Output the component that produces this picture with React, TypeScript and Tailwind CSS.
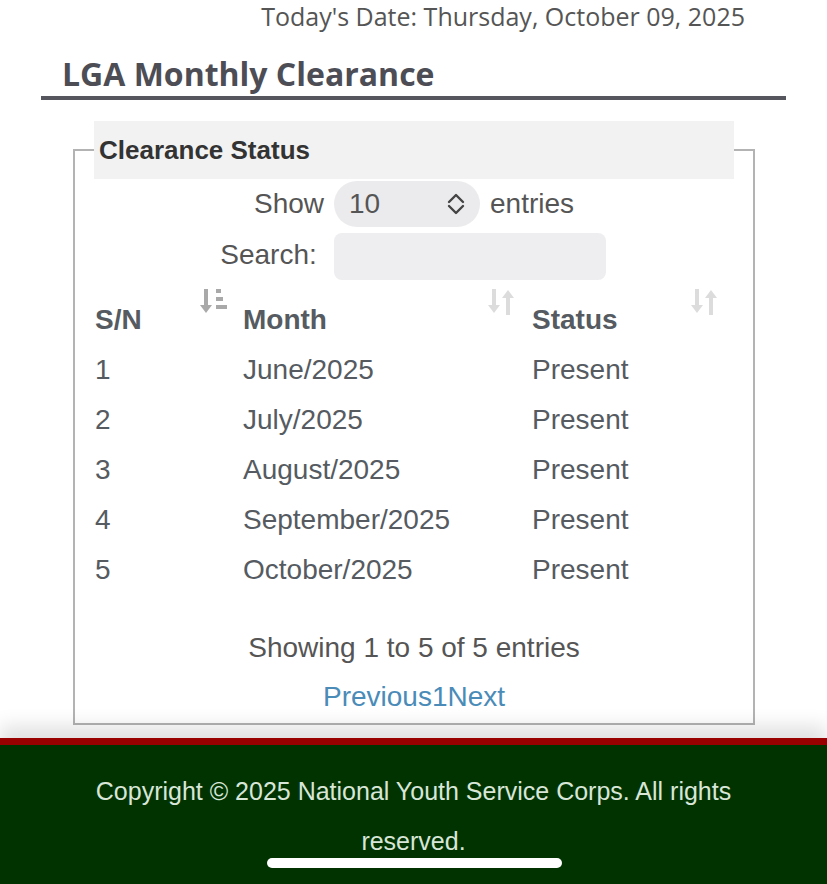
const rows = [
  { sn: 1, month: 'June/2025', status: 'Present' },
  { sn: 2, month: 'July/2025', status: 'Present' },
  { sn: 3, month: 'August/2025', status: 'Present' },
  { sn: 4, month: 'September/2025', status: 'Present' },
  { sn: 5, month: 'October/2025', status: 'Present' },
];

function SortActive() {
  return (
    <svg width="30" height="30" viewBox="0 0 30 30" className="text-[#a9a9a9]">
      <rect x="5" y="2" width="4" height="18" fill="currentColor" />
      <path d="M1 18 L13 18 L7 26 Z" fill="currentColor" />
      <rect x="17" y="2" width="5" height="4" fill="currentColor" />
      <rect x="17" y="10" width="7" height="4" fill="currentColor" />
      <rect x="17" y="18" width="11" height="4" fill="currentColor" />
    </svg>
  );
}

function SortBoth() {
  return (
    <svg width="30" height="30" viewBox="0 0 30 30" className="text-[#dcdcdc]">
      <rect x="6" y="2" width="4" height="18" fill="currentColor" />
      <path d="M2 18 L14 18 L8 26 Z" fill="currentColor" />
      <rect x="20" y="10" width="4" height="18" fill="currentColor" />
      <path d="M16 11 L28 11 L22 3 Z" fill="currentColor" />
    </svg>
  );
}

export default function App() {
  return (
    <div className="relative min-h-[884px] bg-white font-['Liberation_Sans',Arial,sans-serif] overflow-hidden">
      <div className="pr-[82px] text-right font-['Open_Sans',sans-serif] text-[25px] leading-[32px] text-[#555]">
        Today's Date: Thursday, October 09, 2025
      </div>

      <div className="mx-[41px] mt-[22px] border-b-4 border-[#55565e] pl-[21px] pb-[2px]">
        <h1 className="font-['Open_Sans',sans-serif] text-[32px] leading-[40px] font-bold text-[#4d4d55]">
          LGA Monthly Clearance
        </h1>
      </div>

      <fieldset className="ml-[73px] mt-[21px] w-[682px] border-2 border-[#b3b3b3] px-[19px] pb-[11px]">
        <legend className="w-[640px] h-[58px] bg-[#f2f2f2] pl-[5px] text-[26px] font-bold text-[#333] leading-[58px]">
          Clearance Status
        </legend>

        <div className="mt-[2px] flex items-center justify-center gap-[10px] text-[28px] text-[#555]">
          <span>Show</span>
          <div className="flex h-[46px] w-[146px] items-center justify-between rounded-full bg-[#ebebed] pl-[15px] pr-[14px] text-[#555]">
            <span>10</span>
            <svg width="20" height="24" viewBox="0 0 20 24" fill="none" stroke="#444" strokeWidth="2.4" strokeLinecap="round" strokeLinejoin="round">
              <path d="M3 10 L10 3 L17 10" />
              <path d="M3 14 L10 21 L17 14" />
            </svg>
          </div>
          <span>entries</span>
        </div>

        <div className="mt-[6px] flex items-center justify-center gap-[17px] pr-[2px] text-[28px] text-[#555]">
          <span className="-mt-[4px]">Search:</span>
          <div className="h-[47px] w-[272px] rounded-lg bg-[#eeeef0]" />
        </div>

        <table className="mt-[2px] w-[640px] table-fixed border-collapse text-[28px] text-[#555b61]">
          <colgroup>
            <col className="w-[148px]" />
            <col className="w-[289px]" />
            <col className="w-[203px]" />
          </colgroup>
          <thead>
            <tr className="h-[63px]">
              <th className="relative pl-[1px] pt-[12px] text-left font-bold">
                S/N
                <span className="absolute right-[13px] top-[5px]"><SortActive /></span>
              </th>
              <th className="relative pl-[1px] pt-[12px] text-left font-bold">
                Month
                <span className="absolute right-[15px] top-[5px]"><SortBoth /></span>
              </th>
              <th className="relative pl-[1px] pt-[12px] text-left font-bold">
                Status
                <span className="absolute right-[15px] top-[5px]"><SortBoth /></span>
              </th>
            </tr>
          </thead>
          <tbody>
            {rows.map((r) => (
              <tr key={r.sn} className="h-[50px]">
                <td className="pl-[1px]">{r.sn}</td>
                <td className="pl-[1px]">{r.month}</td>
                <td className="pl-[1px]">{r.status}</td>
              </tr>
            ))}
          </tbody>
        </table>

        <div className="mt-[38px] text-center text-[28px] leading-[30px] text-[#555]">
          Showing 1 to 5 of 5 entries
        </div>
        <div className="mt-[19px] text-center text-[28px] leading-[30px] text-[#4a8bb8]">
          Previous1Next
        </div>
      </fieldset>

      <footer className="mt-[13px] border-t-[7px] border-[#990000] bg-[#003300] pt-[21px] pb-[40px] text-center text-[25px] leading-[50px] text-[#d8e6d8] shadow-[0_-12px_18px_rgba(0,0,0,0.12)]">
        <p className="px-[60px]">Copyright © 2025 National Youth Service Corps. All rights reserved.</p>
      </footer>

      <div className="absolute left-[267px] top-[858px] h-[10px] w-[295px] rounded-full bg-white" />
    </div>
  );
}
